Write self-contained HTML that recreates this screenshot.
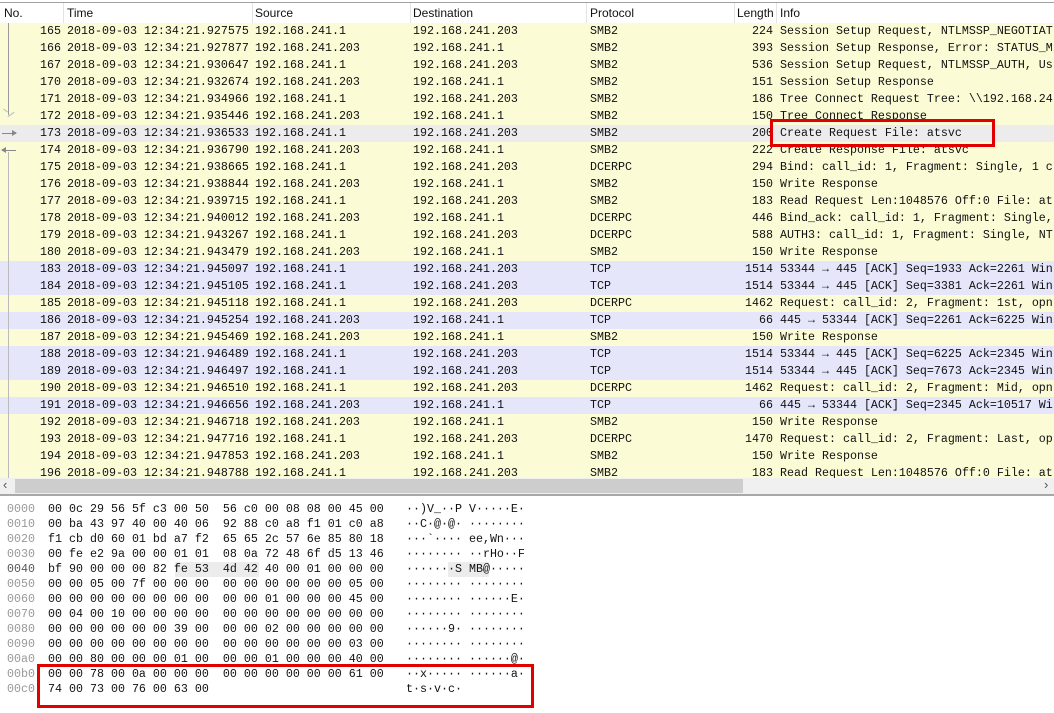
<!DOCTYPE html>
<html><head><meta charset="utf-8"><style>
*{margin:0;padding:0;box-sizing:border-box}
body{width:1054px;height:713px;overflow:hidden;background:#fff;position:relative;font-family:"Liberation Mono",monospace;font-size:11.67px;color:#111}
.hdr{position:absolute;left:0;top:2px;width:1054px;height:21px;background:#fff;border-top:1px solid #a0a0a0;font-family:"Liberation Sans",sans-serif;font-size:12px;color:#111}
.hdr span{position:absolute;top:3px}
.hdr i{position:absolute;top:0;width:1px;height:20px;background:#e3e3e3}
.r{position:absolute;left:0;width:1054px;height:17px;line-height:17px;white-space:pre;background:#fbfbd6}
.t{background:#e6e6fb}
.s{background:#ececec}
.r span{position:absolute;top:0}
.n{width:61px;text-align:right;left:0}
.ln{width:773px;text-align:right;left:0}
.hex{position:absolute;left:0;white-space:pre;height:15px;line-height:15px}
.off{position:absolute;left:7px;color:#999}
.hb{position:absolute;left:48px}
.as{position:absolute;left:406px}
.box{position:absolute;border:3px solid #e00000}
</style></head><body>
<div class="hdr"><span style="left:4px">No.</span><i style="left:63px"></i><span style="left:67px">Time</span><i style="left:252px"></i><span style="left:255px">Source</span><i style="left:410px"></i><span style="left:413px">Destination</span><i style="left:586px"></i><span style="left:590px">Protocol</span><i style="left:734px"></i><span style="left:737px">Length</span><i style="left:776px"></i><span style="left:780px">Info</span></div>

<div class="r" style="top:23px"><span class="n">165</span><span style="left:67px">2018-09-03 12:34:21.927575</span><span style="left:255px">192.168.241.1</span><span style="left:413px">192.168.241.203</span><span style="left:590px">SMB2</span><span class="ln">224</span><span style="left:780px">Session Setup Request, NTLMSSP_NEGOTIAT</span></div>
<div class="r" style="top:40px"><span class="n">166</span><span style="left:67px">2018-09-03 12:34:21.927877</span><span style="left:255px">192.168.241.203</span><span style="left:413px">192.168.241.1</span><span style="left:590px">SMB2</span><span class="ln">393</span><span style="left:780px">Session Setup Response, Error: STATUS_M</span></div>
<div class="r" style="top:57px"><span class="n">167</span><span style="left:67px">2018-09-03 12:34:21.930647</span><span style="left:255px">192.168.241.1</span><span style="left:413px">192.168.241.203</span><span style="left:590px">SMB2</span><span class="ln">536</span><span style="left:780px">Session Setup Request, NTLMSSP_AUTH, Us</span></div>
<div class="r" style="top:74px"><span class="n">170</span><span style="left:67px">2018-09-03 12:34:21.932674</span><span style="left:255px">192.168.241.203</span><span style="left:413px">192.168.241.1</span><span style="left:590px">SMB2</span><span class="ln">151</span><span style="left:780px">Session Setup Response</span></div>
<div class="r" style="top:91px"><span class="n">171</span><span style="left:67px">2018-09-03 12:34:21.934966</span><span style="left:255px">192.168.241.1</span><span style="left:413px">192.168.241.203</span><span style="left:590px">SMB2</span><span class="ln">186</span><span style="left:780px">Tree Connect Request Tree: \\192.168.24</span></div>
<div class="r" style="top:108px"><span class="n">172</span><span style="left:67px">2018-09-03 12:34:21.935446</span><span style="left:255px">192.168.241.203</span><span style="left:413px">192.168.241.1</span><span style="left:590px">SMB2</span><span class="ln">150</span><span style="left:780px">Tree Connect Response</span></div>
<div class="r s" style="top:125px"><span class="n">173</span><span style="left:67px">2018-09-03 12:34:21.936533</span><span style="left:255px">192.168.241.1</span><span style="left:413px">192.168.241.203</span><span style="left:590px">SMB2</span><span class="ln">200</span><span style="left:780px">Create Request File: atsvc</span></div>
<div class="r" style="top:142px"><span class="n">174</span><span style="left:67px">2018-09-03 12:34:21.936790</span><span style="left:255px">192.168.241.203</span><span style="left:413px">192.168.241.1</span><span style="left:590px">SMB2</span><span class="ln">222</span><span style="left:780px">Create Response File: atsvc</span></div>
<div class="r" style="top:159px"><span class="n">175</span><span style="left:67px">2018-09-03 12:34:21.938665</span><span style="left:255px">192.168.241.1</span><span style="left:413px">192.168.241.203</span><span style="left:590px">DCERPC</span><span class="ln">294</span><span style="left:780px">Bind: call_id: 1, Fragment: Single, 1 c</span></div>
<div class="r" style="top:176px"><span class="n">176</span><span style="left:67px">2018-09-03 12:34:21.938844</span><span style="left:255px">192.168.241.203</span><span style="left:413px">192.168.241.1</span><span style="left:590px">SMB2</span><span class="ln">150</span><span style="left:780px">Write Response</span></div>
<div class="r" style="top:193px"><span class="n">177</span><span style="left:67px">2018-09-03 12:34:21.939715</span><span style="left:255px">192.168.241.1</span><span style="left:413px">192.168.241.203</span><span style="left:590px">SMB2</span><span class="ln">183</span><span style="left:780px">Read Request Len:1048576 Off:0 File: at</span></div>
<div class="r" style="top:210px"><span class="n">178</span><span style="left:67px">2018-09-03 12:34:21.940012</span><span style="left:255px">192.168.241.203</span><span style="left:413px">192.168.241.1</span><span style="left:590px">DCERPC</span><span class="ln">446</span><span style="left:780px">Bind_ack: call_id: 1, Fragment: Single,</span></div>
<div class="r" style="top:227px"><span class="n">179</span><span style="left:67px">2018-09-03 12:34:21.943267</span><span style="left:255px">192.168.241.1</span><span style="left:413px">192.168.241.203</span><span style="left:590px">DCERPC</span><span class="ln">588</span><span style="left:780px">AUTH3: call_id: 1, Fragment: Single, NT</span></div>
<div class="r" style="top:244px"><span class="n">180</span><span style="left:67px">2018-09-03 12:34:21.943479</span><span style="left:255px">192.168.241.203</span><span style="left:413px">192.168.241.1</span><span style="left:590px">SMB2</span><span class="ln">150</span><span style="left:780px">Write Response</span></div>
<div class="r t" style="top:261px"><span class="n">183</span><span style="left:67px">2018-09-03 12:34:21.945097</span><span style="left:255px">192.168.241.1</span><span style="left:413px">192.168.241.203</span><span style="left:590px">TCP</span><span class="ln">1514</span><span style="left:780px">53344 → 445 [ACK] Seq=1933 Ack=2261 Win</span></div>
<div class="r t" style="top:278px"><span class="n">184</span><span style="left:67px">2018-09-03 12:34:21.945105</span><span style="left:255px">192.168.241.1</span><span style="left:413px">192.168.241.203</span><span style="left:590px">TCP</span><span class="ln">1514</span><span style="left:780px">53344 → 445 [ACK] Seq=3381 Ack=2261 Win</span></div>
<div class="r" style="top:295px"><span class="n">185</span><span style="left:67px">2018-09-03 12:34:21.945118</span><span style="left:255px">192.168.241.1</span><span style="left:413px">192.168.241.203</span><span style="left:590px">DCERPC</span><span class="ln">1462</span><span style="left:780px">Request: call_id: 2, Fragment: 1st, opn</span></div>
<div class="r t" style="top:312px"><span class="n">186</span><span style="left:67px">2018-09-03 12:34:21.945254</span><span style="left:255px">192.168.241.203</span><span style="left:413px">192.168.241.1</span><span style="left:590px">TCP</span><span class="ln">66</span><span style="left:780px">445 → 53344 [ACK] Seq=2261 Ack=6225 Win</span></div>
<div class="r" style="top:329px"><span class="n">187</span><span style="left:67px">2018-09-03 12:34:21.945469</span><span style="left:255px">192.168.241.203</span><span style="left:413px">192.168.241.1</span><span style="left:590px">SMB2</span><span class="ln">150</span><span style="left:780px">Write Response</span></div>
<div class="r t" style="top:346px"><span class="n">188</span><span style="left:67px">2018-09-03 12:34:21.946489</span><span style="left:255px">192.168.241.1</span><span style="left:413px">192.168.241.203</span><span style="left:590px">TCP</span><span class="ln">1514</span><span style="left:780px">53344 → 445 [ACK] Seq=6225 Ack=2345 Win</span></div>
<div class="r t" style="top:363px"><span class="n">189</span><span style="left:67px">2018-09-03 12:34:21.946497</span><span style="left:255px">192.168.241.1</span><span style="left:413px">192.168.241.203</span><span style="left:590px">TCP</span><span class="ln">1514</span><span style="left:780px">53344 → 445 [ACK] Seq=7673 Ack=2345 Win</span></div>
<div class="r" style="top:380px"><span class="n">190</span><span style="left:67px">2018-09-03 12:34:21.946510</span><span style="left:255px">192.168.241.1</span><span style="left:413px">192.168.241.203</span><span style="left:590px">DCERPC</span><span class="ln">1462</span><span style="left:780px">Request: call_id: 2, Fragment: Mid, opn</span></div>
<div class="r t" style="top:397px"><span class="n">191</span><span style="left:67px">2018-09-03 12:34:21.946656</span><span style="left:255px">192.168.241.203</span><span style="left:413px">192.168.241.1</span><span style="left:590px">TCP</span><span class="ln">66</span><span style="left:780px">445 → 53344 [ACK] Seq=2345 Ack=10517 Wi</span></div>
<div class="r" style="top:414px"><span class="n">192</span><span style="left:67px">2018-09-03 12:34:21.946718</span><span style="left:255px">192.168.241.203</span><span style="left:413px">192.168.241.1</span><span style="left:590px">SMB2</span><span class="ln">150</span><span style="left:780px">Write Response</span></div>
<div class="r" style="top:431px"><span class="n">193</span><span style="left:67px">2018-09-03 12:34:21.947716</span><span style="left:255px">192.168.241.1</span><span style="left:413px">192.168.241.203</span><span style="left:590px">DCERPC</span><span class="ln">1470</span><span style="left:780px">Request: call_id: 2, Fragment: Last, op</span></div>
<div class="r" style="top:448px"><span class="n">194</span><span style="left:67px">2018-09-03 12:34:21.947853</span><span style="left:255px">192.168.241.203</span><span style="left:413px">192.168.241.1</span><span style="left:590px">SMB2</span><span class="ln">150</span><span style="left:780px">Write Response</span></div>
<div class="r" style="top:465px;height:13px;overflow:hidden"><span class="n">196</span><span style="left:67px">2018-09-03 12:34:21.948788</span><span style="left:255px">192.168.241.1</span><span style="left:413px">192.168.241.203</span><span style="left:590px">SMB2</span><span class="ln">183</span><span style="left:780px">Read Request Len:1048576 Off:0 File: at</span></div>

<!-- related packet gutter -->
<div style="position:absolute;left:8px;top:23px;width:1px;height:92px;background:#999"></div>
<div style="position:absolute;left:3px;top:110px;width:5px;height:1px;background:#bbb;transform:rotate(35deg)"></div>
<div style="position:absolute;left:7px;top:114px;width:8px;height:1px;background:#bbb;transform:rotate(-35deg)"></div>
<div style="position:absolute;left:2px;top:133px;width:14px;height:1px;background:#888"></div>
<div style="position:absolute;left:12px;top:130px;width:0;height:0;border-left:5px solid #888;border-top:3px solid transparent;border-bottom:3px solid transparent"></div>
<div style="position:absolute;left:2px;top:150px;width:14px;height:1px;background:#888"></div>
<div style="position:absolute;left:1px;top:147px;width:0;height:0;border-right:5px solid #888;border-top:3px solid transparent;border-bottom:3px solid transparent"></div>
<div style="position:absolute;left:8px;top:152px;width:1px;height:326px;background:#bbb"></div>

<!-- scrollbar -->
<div style="position:absolute;left:0;top:478px;width:1054px;height:16px;background:#f0f0f0"></div>
<div style="position:absolute;left:15px;top:479px;width:728px;height:14px;background:#cdcdcd"></div>
<div style="position:absolute;left:3px;top:477px;font-family:'Liberation Sans',sans-serif;font-size:13px;color:#555">‹</div>
<div style="position:absolute;left:1044px;top:477px;font-family:'Liberation Sans',sans-serif;font-size:13px;color:#555">›</div>
<div style="position:absolute;left:0;top:494px;width:1054px;height:2px;background:#a8a8a8"></div>

<!-- hex -->
<div style="position:absolute;left:175px;top:562px;width:84px;height:15px;background:#ececec"></div>
<div style="position:absolute;left:448px;top:562px;width:41px;height:15px;background:#ececec"></div>
<div class="hex" style="top:502px"><span class="off">0000</span><span class="hb">00 0c 29 56 5f c3 00 50  56 c0 00 08 08 00 45 00</span><span class="as">··)V_··P V·····E·</span></div>
<div class="hex" style="top:517px"><span class="off">0010</span><span class="hb">00 ba 43 97 40 00 40 06  92 88 c0 a8 f1 01 c0 a8</span><span class="as">··C·@·@· ········</span></div>
<div class="hex" style="top:532px"><span class="off">0020</span><span class="hb">f1 cb d0 60 01 bd a7 f2  65 65 2c 57 6e 85 80 18</span><span class="as">···`···· ee,Wn···</span></div>
<div class="hex" style="top:547px"><span class="off">0030</span><span class="hb">00 fe e2 9a 00 00 01 01  08 0a 72 48 6f d5 13 46</span><span class="as">········ ··rHo··F</span></div>
<div class="hex" style="top:562px"><span class="off" style="color:#555">0040</span><span class="hb">bf 90 00 00 00 82 fe 53  4d 42 40 00 01 00 00 00</span><span class="as">·······S MB@·····</span></div>
<div class="hex" style="top:577px"><span class="off">0050</span><span class="hb">00 00 05 00 7f 00 00 00  00 00 00 00 00 00 05 00</span><span class="as">········ ········</span></div>
<div class="hex" style="top:592px"><span class="off">0060</span><span class="hb">00 00 00 00 00 00 00 00  00 00 01 00 00 00 45 00</span><span class="as">········ ······E·</span></div>
<div class="hex" style="top:607px"><span class="off">0070</span><span class="hb">00 04 00 10 00 00 00 00  00 00 00 00 00 00 00 00</span><span class="as">········ ········</span></div>
<div class="hex" style="top:622px"><span class="off">0080</span><span class="hb">00 00 00 00 00 00 39 00  00 00 02 00 00 00 00 00</span><span class="as">······9· ········</span></div>
<div class="hex" style="top:637px"><span class="off">0090</span><span class="hb">00 00 00 00 00 00 00 00  00 00 00 00 00 00 03 00</span><span class="as">········ ········</span></div>
<div class="hex" style="top:652px"><span class="off">00a0</span><span class="hb">00 00 80 00 00 00 01 00  00 00 01 00 00 00 40 00</span><span class="as">········ ······@·</span></div>
<div class="hex" style="top:667px"><span class="off">00b0</span><span class="hb">00 00 78 00 0a 00 00 00  00 00 00 00 00 00 61 00</span><span class="as">··x····· ······a·</span></div>
<div class="hex" style="top:682px"><span class="off">00c0</span><span class="hb">74 00 73 00 76 00 63 00</span><span class="as">t·s·v·c·</span></div>

<div class="box" style="left:770px;top:119px;width:225px;height:28px"></div>
<div class="box" style="left:37px;top:664px;width:497px;height:44px"></div>
</body></html>
